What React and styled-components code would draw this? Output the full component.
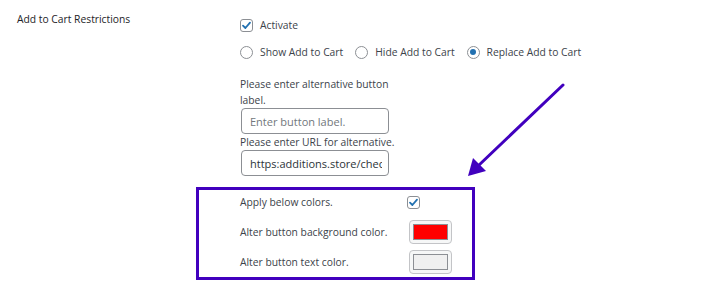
import React from "react";
import styled, { createGlobalStyle } from "styled-components";

const Global = createGlobalStyle`
  html, body { margin: 0; padding: 0; background: #fff; }
  body { font-family: "Open Sans", "Noto Sans", sans-serif; font-size: 10.3px; color: #3c434a; }
  * { box-sizing: border-box; }
`;

const Page = styled.div`
  position: relative;
  width: 703px;
  height: 284px;
  overflow: hidden;
`;

const Row = styled.div`
  display: flex;
  align-items: flex-start;
`;

const RowLabel = styled.div`
  width: 240px;
  padding: 11px 0 0 17px;
  color: #1d2327;
  line-height: 16px;
`;

const Field = styled.div`
  display: flex;
  flex-direction: column;
  padding-top: 17px;
`;

const Option = styled.label`
  display: flex;
  align-items: center;
  gap: 7px;
  height: 16px;
  line-height: 16px;
  margin-right: ${(p) => p.$mr || 0}px;
`;

const OptionRow = styled.div`
  display: flex;
  align-items: center;
  margin-top: ${(p) => p.$mt || 0}px;
`;

const Box = styled.span`
  width: 13px;
  height: 13px;
  border: 1px solid #8c8f94;
  border-radius: 3px;
  background: #fff;
  display: inline-flex;
  align-items: center;
  justify-content: center;
  flex: none;
`;

const Radio = styled.span`
  width: 13px;
  height: 13px;
  border: 1px solid #8c8f94;
  border-radius: 50%;
  background: #fff;
  display: inline-flex;
  align-items: center;
  justify-content: center;
  flex: none;
  &::after {
    content: "";
    width: 6px;
    height: 6px;
    border-radius: 50%;
    background: ${(p) => (p.$on ? "#2271b1" : "transparent")};
  }
`;

const Group = styled.div`
  width: 156px;
  display: flex;
  flex-direction: column;
  margin-top: ${(p) => p.$mt || 0}px;
`;

const Help = styled.div`
  line-height: 16px;
`;

const Input = styled.div`
  height: 26px;
  width: 148px;
  border: 1px solid #8c8f94;
  border-radius: 4px;
  padding: 0 6px 0 8px;
  display: flex;
  align-items: center;
  color: ${(p) => (p.$placeholder ? "#72777c" : "#2c3338")};
  margin: 0 0 0 1px;
  font-size: 11px;
`;

const InputText = styled.span`
  white-space: nowrap;
  overflow: hidden;
  flex: 1;
`;

const Framed = styled.div`
  margin: 11px 0 0 -44px;
  width: 279px;
  height: 93px;
  border: 3px solid #4100be;
  padding: 0 0 0 41px;
  display: flex;
  flex-direction: column;
  gap: 6px;
`;

const ColorRow = styled.div`
  display: flex;
  align-items: center;
  height: 24px;
`;

const ColorLabel = styled.div`
  width: ${(p) => p.$w}px;
  flex: none;
`;

const ColorButton = styled.span`
  width: 43px;
  height: 24px;
  border: 1px solid #c3c4c7;
  border-radius: 4px;
  background: #f6f7f7;
  padding: 3px;
  display: flex;
`;

const Swatch = styled.span`
  flex: 1;
  border: 1px solid #8c8f94;
  background: ${(p) => p.$c};
`;

const Arrow = styled.svg`
  position: absolute;
  left: 0;
  top: 0;
  pointer-events: none;
`;

const Check = () => (
  <svg width="11" height="11" viewBox="0 0 11 11">
    <path d="M2 5.6 L4.4 8 L9 2.6" fill="none" stroke="#2271b1" strokeWidth="1.8" strokeLinecap="round" strokeLinejoin="round" />
  </svg>
);

export default function App() {
  return (
    <Page>
      <Global />
      <Row>
        <RowLabel>Add to Cart Restrictions</RowLabel>
        <Field>
          <Option>
            <Box><Check /></Box>
            Activate
          </Option>
          <OptionRow $mt={11}>
            <Option $mr={12}><Radio />Show Add to Cart</Option>
            <Option $mr={12}><Radio />Hide Add to Cart</Option>
            <Option><Radio $on />Replace Add to Cart</Option>
          </OptionRow>
          <Group $mt={16}>
            <Help>Please enter alternative button label.</Help>
            <Input $placeholder><InputText>Enter button label.</InputText></Input>
            <Help>Please enter URL for alternative.</Help>
            <Input><InputText>https:additions.store/checkout</InputText></Input>
          </Group>
          <Framed>
            <ColorRow>
              <ColorLabel $w={167}>Apply below colors.</ColorLabel>
              <Box><Check /></Box>
            </ColorRow>
            <ColorRow>
              <ColorLabel $w={169}>Alter button background color.</ColorLabel>
              <ColorButton><Swatch $c="#ff0000" /></ColorButton>
            </ColorRow>
            <ColorRow>
              <ColorLabel $w={169}>Alter button text color.</ColorLabel>
              <ColorButton><Swatch $c="#f0f0f0" /></ColorButton>
            </ColorRow>
          </Framed>
        </Field>
      </Row>
      <Arrow width="703" height="284" viewBox="0 0 703 284">
        <line x1="563" y1="85" x2="478" y2="166" stroke="#4100be" strokeWidth="3" strokeLinecap="round" />
        <polygon points="468,176 473,158 486,171" fill="#4100be" />
      </Arrow>
    </Page>
  );
}
